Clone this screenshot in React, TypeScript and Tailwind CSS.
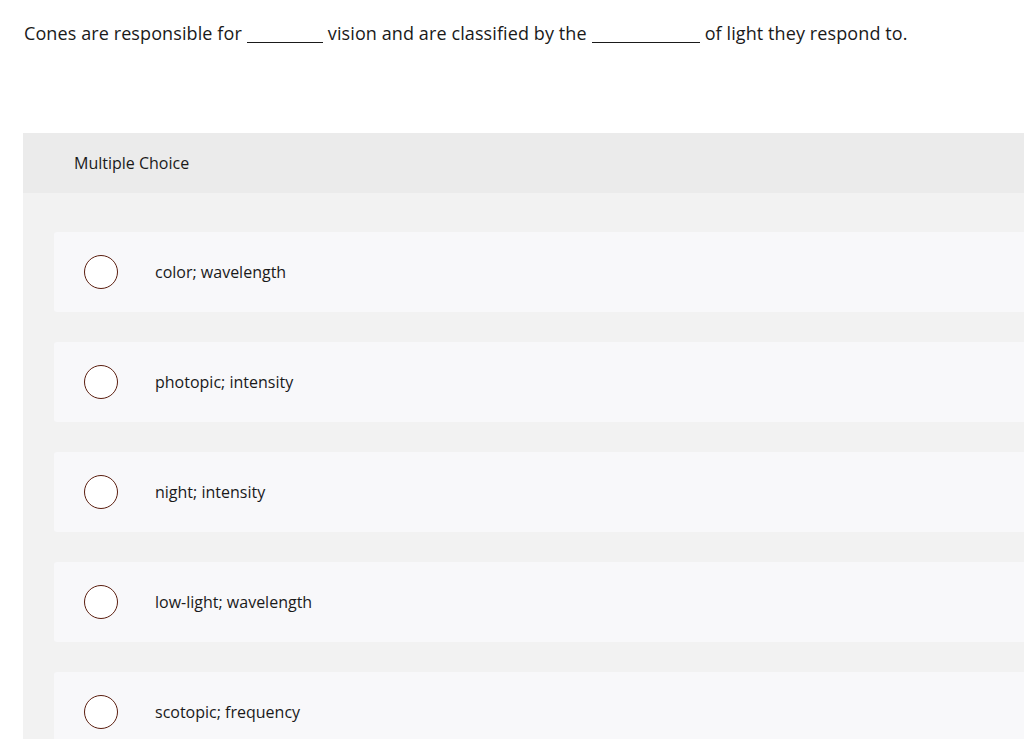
const options = [
  "color; wavelength",
  "photopic; intensity",
  "night; intensity",
  "low-light; wavelength",
  "scotopic; frequency",
];

const Blank = ({ width }: { width: string }) => (
  <span className={`inline-block ${width} mx-[5px] border-b border-[#1a1a1a] translate-y-[3px]`} />
);

export default function App() {
  return (
    <div className="h-[739px] w-[1024px] overflow-hidden bg-white font-['Open_Sans',sans-serif] text-[#1a1a1a]">
      <p className="pl-[24px] pt-[20px] text-[18px] leading-[26px] tracking-[0.1px]">
        Cones are responsible for
        <Blank width="w-[76px]" />
        vision and are classified by the
        <Blank width="w-[108px]" />
        of light they respond to.
      </p>

      <div className="ml-[23px] mt-[87px] w-[1040px] bg-[#f2f2f2]">
        <div className="flex h-[60px] items-center bg-[#ebebeb] pl-[51px] text-[16px] text-[#1a1a1a]">
          Multiple Choice
        </div>
        <div className="flex flex-col gap-[30px] pl-[31px] pt-[39px] pb-[30px]">
          {options.map((opt) => (
            <div
              key={opt}
              className="flex h-[80px] items-center rounded-[3px] bg-[#f8f8fa] pl-[30px]"
            >
              <span className="h-[34px] w-[34px] shrink-0 rounded-full border-[1.5px] border-[#5b1e0f] bg-white" />
              <span className="ml-[37px] text-[16px] text-[#1a1a1a]">{opt}</span>
            </div>
          ))}
        </div>
      </div>
    </div>
  );
}
